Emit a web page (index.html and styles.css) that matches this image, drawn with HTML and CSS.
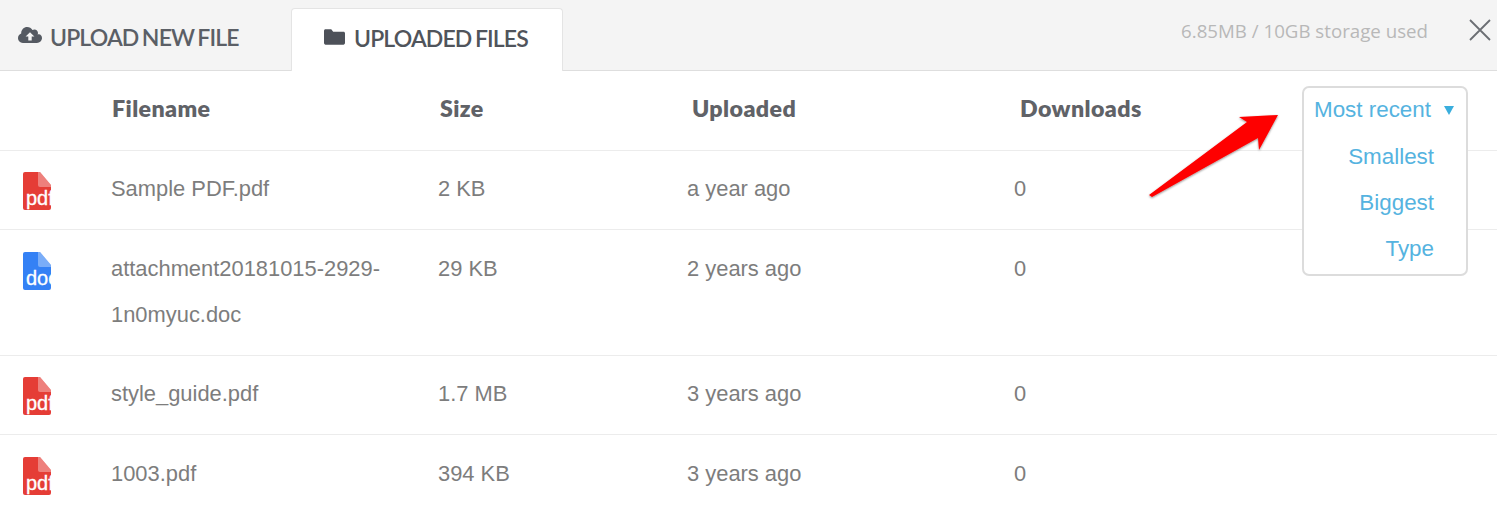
FILE: index.html
```html
<!DOCTYPE html>
<html lang="en">
<head>
<meta charset="utf-8">
<title>Uploaded files</title>
<link rel="stylesheet" href="styles.css">
</head>
<body>
<div class="panel">
  <header class="tabbar">
    <div class="tab">
      <svg class="tab-icon" viewBox="0 0 24 18" aria-hidden="true"><path fill="#555a62" d="M19.6 7.6C19.8 7.1 20 6.6 20 6c0-2-1.600-3.600-3.600-3.600-.7 0-1.400.2-2 .6C13.400 1.200 11.400 0 9.200 0 5.900 0 3.200 2.700 3.200 6v.4C1.300 7.100 0 8.900 0 11c0 2.700 2.200 4.900 4.800 4.900H19c2.700 0 5-2.200 5-4.800 0-2.400-1.900-4.500-4.400-3.500z"/><path fill="#f4f4f4" d="M12 5.200l-4.400 4.400h2.700v3.800h3.400V9.600h2.700z"/></svg>
      <span>UPLOAD NEW FILE</span>
    </div>
    <div class="tab tab-active">
      <svg class="tab-icon folder" viewBox="0 0 22 18" aria-hidden="true"><path fill="#4d5159" d="M1.600 1h6l2 2.600h10.800c.9 0 1.600.7 1.600 1.600v10.200c0 .9-.7 1.600-1.600 1.600H1.600C.7 17 0 16.300 0 15.400V2.600C0 1.700.7 1 1.600 1z"/></svg>
      <span>UPLOADED FILES</span>
    </div>
    <div class="storage">6.85MB / 10GB storage used</div>
    <svg class="close" viewBox="0 0 24 24" aria-hidden="true"><path d="M2 2l20 20M22 2L2 22" stroke="#6b6e73" stroke-width="1.800" fill="none"/></svg>
  </header>

  <main class="table">
    <div class="head">
      <div>Filename</div><div>Size</div><div>Uploaded</div><div>Downloads</div>
    </div>

    <div class="row">
      <svg class="ficon" viewBox="0 0 28 38"><path class="red" d="M2 0h15l11 13v23a2 2 0 0 1-2 2H2a2 2 0 0 1-2-2V2a2 2 0 0 1 2-2z"/><path class="fold" d="M15 0h2l11 13v2H17a2 2 0 0 1-2-2z"/><text x="3" y="33">pdf</text></svg>
      <div>Sample PDF.pdf</div><div>2 KB</div><div>a year ago</div><div>0</div>
    </div>
    <div class="row row-tall">
      <svg class="ficon" viewBox="0 0 28 38"><path class="blue" d="M2 0h15l11 13v23a2 2 0 0 1-2 2H2a2 2 0 0 1-2-2V2a2 2 0 0 1 2-2z"/><path class="fold" d="M15 0h2l11 13v2H17a2 2 0 0 1-2-2z"/><text x="3" y="33">doc</text></svg>
      <div>attachment20181015-2929-<br>1n0myuc.doc</div><div>29 KB</div><div>2 years ago</div><div>0</div>
    </div>
    <div class="row">
      <svg class="ficon" viewBox="0 0 28 38"><path class="red" d="M2 0h15l11 13v23a2 2 0 0 1-2 2H2a2 2 0 0 1-2-2V2a2 2 0 0 1 2-2z"/><path class="fold" d="M15 0h2l11 13v2H17a2 2 0 0 1-2-2z"/><text x="3" y="33">pdf</text></svg>
      <div>style_guide.pdf</div><div>1.7 MB</div><div>3 years ago</div><div>0</div>
    </div>
    <div class="row">
      <svg class="ficon" viewBox="0 0 28 38"><path class="red" d="M2 0h15l11 13v23a2 2 0 0 1-2 2H2a2 2 0 0 1-2-2V2a2 2 0 0 1 2-2z"/><path class="fold" d="M15 0h2l11 13v2H17a2 2 0 0 1-2-2z"/><text x="3" y="33">pdf</text></svg>
      <div>1003.pdf</div><div>394 KB</div><div>3 years ago</div><div>0</div>
    </div>
  </main>

  <div class="sort">
    <div class="sort-current">Most recent<span class="caret"></span></div>
    <div class="sort-item">Smallest</div>
    <div class="sort-item">Biggest</div>
    <div class="sort-item">Type</div>
  </div>

  <svg class="arrow" viewBox="0 0 150 100" aria-hidden="true">
    <defs><filter id="sh" x="-20%" y="-20%" width="140%" height="140%"><feDropShadow dx="0" dy="1" stdDeviation="1" flood-color="#000" flood-opacity=".45"/></filter></defs>
    <path fill="#fe0000" filter="url(#sh)" d="M4 92L102 19 94 14 133 12 114 47 113 35 7 94z"/>
  </svg>
</div>
</body>
</html>
```

FILE: styles.css
```css
* { box-sizing: border-box; }
html, body { margin: 0; padding: 0; background: #fff; }
body { width: 1497px; height: 510px; overflow: hidden; }
.panel { position: relative; width: 1497px; height: 510px; overflow: hidden; font-family: "Liberation Sans", Arial, sans-serif; }

.tabbar {
  display: flex;
  align-items: flex-end;
  height: 71px;
  background: #f4f4f4;
  border-bottom: 1px solid #dedede;
}
.tab {
  display: flex;
  align-items: center;
  gap: 8px;
  height: 62px;
  padding: 0 0 4px 18px;
  width: 291px;
  font-family: Lato, "Liberation Sans", sans-serif;
  font-size: 23px;
  font-weight: 600;
  color: #5b5f66;
  letter-spacing: -0.85px;
  word-spacing: -1.5px;
}
.tab-active {
  width: 272px;
  height: 63px;
  margin-bottom: -1px;
  padding: 0 0 4px 32px;
  gap: 9px;
  background: #fff;
  border: 1px solid #e4e4e4;
  border-bottom: none;
  border-radius: 4px 4px 0 0;
  color: #50545b;
}
.tab-icon { width: 24px; height: 18px; flex: none; margin-top: -3px; }
.folder { width: 21px; }
.storage {
  margin-left: auto;
  align-self: center;
  margin-top: -10px;
  margin-right: 40px;
  font-family: "Open Sans", sans-serif;
  font-size: 18.700px;
  color: #b8b8b8;
}
.close { width: 24px; height: 24px; flex: none; align-self: center; margin: -10px 5px 0 0; }

.table { display: block; }
.row {
  display: grid;
  grid-template-columns: 111px 327px 249px 327px 1fr;
  align-items: start;
  padding: 16px 0;
  border-bottom: 1px solid #ececec;
  font-size: 21.900px;
  line-height: 46px;
  color: #7d7d7d;
}
.row:nth-child(even) { padding: 15px 0 17px; }
.row-tall { padding-bottom: 17px; }
.row:last-child { border-bottom: none; }
.head {
  display: grid;
  grid-template-columns: 328px 252px 328px 1fr;
  padding: 21px 0 0 112px;
  height: 80px;
  border-bottom: 1px solid #ececec;
  font-family: Lato, "Liberation Sans", sans-serif;
  font-weight: 800;
  font-size: 23.200px;
  line-height: 32px;
  letter-spacing: 0.4px;
  color: #606267;
}
.ficon { display: block; width: 28px; height: 38px; margin: 6px 0 0 23px; overflow: hidden; }
.ficon text { font-family: "Liberation Sans", Arial, sans-serif; font-size: 20px; fill: #fff; stroke: #fff; stroke-width: .3px; }
.red { fill: #e53d36; }
.blue { fill: #3481f5; }
.fold { fill: #ffffff; opacity: .35; }

.sort {
  position: absolute;
  left: 1302px;
  top: 86px;
  width: 166px;
  height: 190px;
  background: #fff;
  border: 2px solid #dcdcdc;
  border-radius: 7px;
  font-size: 22.400px;
  color: #55b3e0;
}
.sort-current { display: flex; align-items: center; height: 44px; margin-bottom: 2px; padding-left: 10px; }
.caret {
  width: 0; height: 0;
  margin-left: 13px;
  border-left: 5.500px solid transparent;
  border-right: 5.500px solid transparent;
  border-top: 9px solid #3aaedd;
}
.sort-item { height: 46px; line-height: 46px; text-align: right; padding-right: 32px; }

.arrow { position: absolute; left: 1145px; top: 103px; width: 150px; height: 100px; }
```
